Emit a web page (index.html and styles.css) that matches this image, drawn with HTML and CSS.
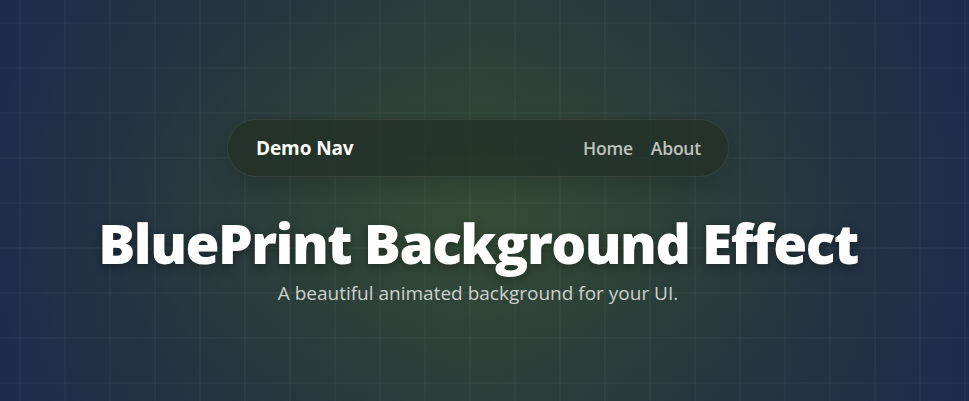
FILE: index.html
```html
<!DOCTYPE html>
<html lang="en">
<head>
<meta charset="utf-8">
<title>BluePrint Background Effect</title>
<link rel="stylesheet" href="styles.css">
</head>
<body>
<div class="page">
  <div class="grid"></div>
  <main class="content">
    <nav class="nav">
      <span class="brand">Demo Nav</span>
      <div class="links">
        <a href="#" class="link">Home</a>
        <a href="#" class="link">About</a>
      </div>
    </nav>
    <h1 class="title">BluePrint Background Effect</h1>
    <p class="subtitle">A beautiful animated background for your UI.</p>
  </main>
</div>
</body>
</html>
```

FILE: styles.css
```css
html, body {
  margin: 0;
  padding: 0;
  height: 100%;
}
body {
  font-family: "Open Sans", "Noto Sans", sans-serif;
  background: #1f2a4a;
  overflow: hidden;
}
.page {
  position: relative;
  width: 100%;
  height: 100%;
  background:
    radial-gradient(ellipse 520px 320px at 478px 210px, rgba(54, 78, 54, 0.9) 0%, rgba(46, 68, 54, 0.65) 40%, rgba(36, 55, 60, 0.3) 75%, rgba(31, 42, 74, 0) 100%),
    linear-gradient(90deg, #1f2b4c 0%, #25363f 30%, #2b3f3b 50%, #25363f 70%, #1f2b4c 100%);
}
.grid {
  position: absolute;
  inset: 0;
  background-image:
    linear-gradient(90deg, rgba(130, 160, 160, 0.06) 0 2px, transparent 2px),
    linear-gradient(180deg, rgba(130, 160, 160, 0.06) 0 2px, transparent 2px);
  background-size: 45px 45px;
  background-position: 19px 22px;
}
.content {
  position: relative;
  display: flex;
  flex-direction: column;
  align-items: center;
  padding: 119px 13px 0 0;
}
.nav {
  box-sizing: border-box;
  width: 502px;
  height: 58px;
  display: flex;
  align-items: center;
  justify-content: space-between;
  padding: 0 27px 0 28px;
  border-radius: 29px;
  background: rgba(35, 48, 38, 0.78);
  border: 1px solid rgba(255, 255, 255, 0.08);
  box-shadow: 0 8px 24px rgba(0, 0, 0, 0.15);
}
.brand {
  color: #ffffff;
  font-weight: 700;
  font-size: 19px;
  letter-spacing: -0.1px;
}
.links {
  display: flex;
  gap: 18px;
}
.link {
  color: #bec3bd;
  font-weight: 600;
  font-size: 17.5px;
  text-decoration: none;
  letter-spacing: -0.2px;
}
.title {
  margin: 33px 0 0;
  color: #ffffff;
  font-weight: 800;
  font-size: 55px;
  line-height: 1.2;
  letter-spacing: -1.5px;
  text-shadow: 0 3px 10px rgba(0, 0, 0, 0.35);
}
.subtitle {
  margin: 4px 0 0;
  color: #cdd1cc;
  font-size: 19px;
  line-height: 1.4;
}
```
